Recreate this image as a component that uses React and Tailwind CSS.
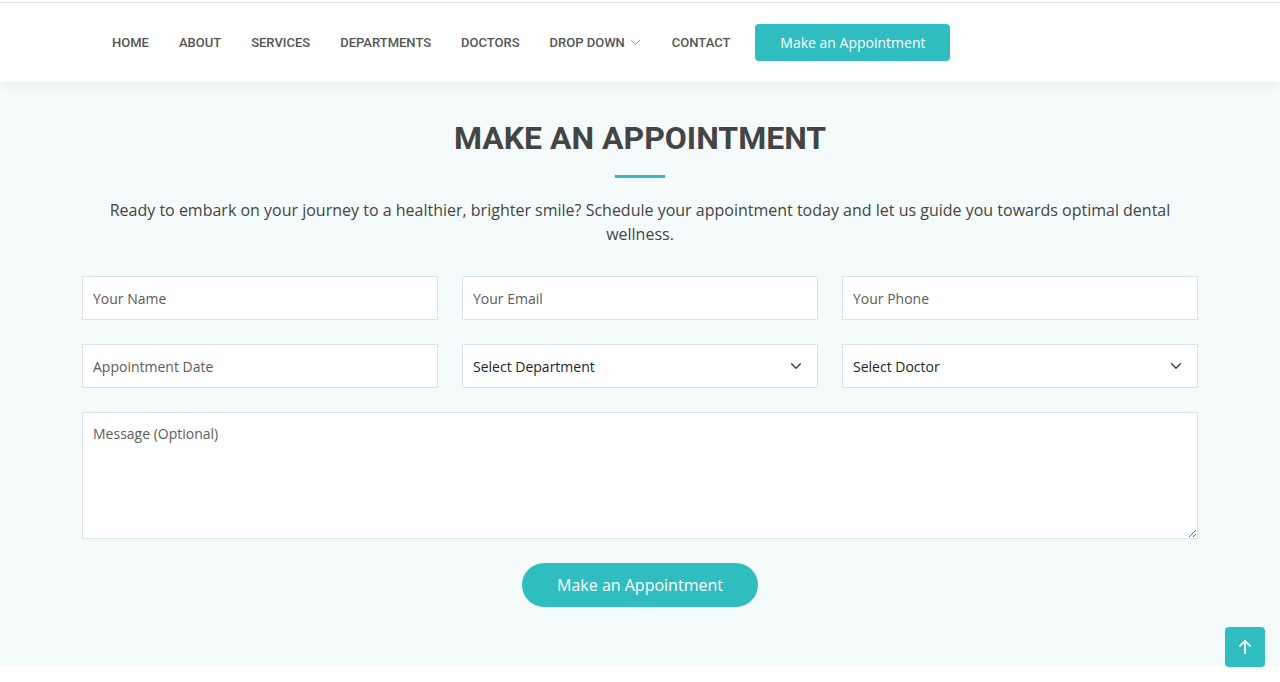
import React from "react";

const NAV = ["HOME", "ABOUT", "SERVICES", "DEPARTMENTS", "DOCTORS"];

function Chevron({ className, width = "1.5" }) {
  return (
    <svg viewBox="0 0 16 16" className={className} fill="none" stroke="currentColor" strokeWidth={width} strokeLinecap="round" strokeLinejoin="round">
      <path d="M3 5.5l5 5 5-5" />
    </svg>
  );
}

function Field({ placeholder }) {
  return (
    <input
      placeholder={placeholder}
      className="h-[44px] w-full border border-[#dee2e6] bg-white px-[10px] text-[14px] text-[#212529] outline-none placeholder:text-[#5c5c5c]"
    />
  );
}

function Select({ label }) {
  return (
    <div className="flex h-[44px] w-full items-center justify-between border border-[#dee2e6] bg-white pl-[10px] pr-[14px] text-[14px] text-[#212529]">
      <span>{label}</span>
      <Chevron className="h-[14px] w-[14px] text-[#343a40]" />
    </div>
  );
}

export default function App() {
  return (
    <div className="min-h-[682px] bg-white font-['Open_Sans',sans-serif]">
      <header className="relative z-10 h-[82px] bg-white pt-[2px] shadow-[0_2px_12px_rgba(0,0,0,0.07)]">
        <div className="border-t border-[#e2e2e2]" />
        <div className="flex h-[79px] items-center pl-[82px]">
          <nav className="flex items-center font-['Roboto',sans-serif] text-[13px] font-medium text-[#555555]">
            {NAV.map((n) => (
              <a key={n} className="pl-[30px]">{n}</a>
            ))}
            <a className="flex items-center gap-[4px] pl-[30px]">
              DROP DOWN <Chevron className="h-[13px] w-[13px] text-[#777777]" width="1" />
            </a>
            <a className="pl-[30px]">CONTACT</a>
          </nav>
          <button className="ml-[25px] h-[37px] w-[195px] rounded-[4px] bg-[#30bdbf] text-[14px] text-white">
            Make an Appointment
          </button>
        </div>
      </header>

      <section className="h-[584px] bg-[#f5fbfb] pt-[36px]">
        <div className="mx-auto w-[1116px]">
          <div className="flex flex-col items-center">
            <h2 className="font-['Roboto',sans-serif] text-[32px] font-bold leading-[40px] text-[#444444]">
              MAKE AN APPOINTMENT
            </h2>
            <div className="mt-[17px] h-[3px] w-[50px] bg-[#30bdbf]" />
            <p className="mt-[20px] text-center text-[16px] leading-[24px] text-[#444444]">
              Ready to embark on your journey to a healthier, brighter smile? Schedule your appointment today and let us guide you towards optimal dental wellness.
            </p>
          </div>

          <div className="mt-[30px] grid grid-cols-3 gap-[24px]">
            <Field placeholder="Your Name" />
            <Field placeholder="Your Email" />
            <Field placeholder="Your Phone" />
            <Field placeholder="Appointment Date" />
            <Select label="Select Department" />
            <Select label="Select Doctor" />
          </div>

          <textarea
            placeholder="Message (Optional)"
            className="mt-[24px] block h-[127px] w-full border border-[#dee2e6] bg-white px-[10px] py-[10px] text-[14px] outline-none placeholder:text-[#5c5c5c]"
          />

          <div className="mt-[24px] flex justify-center">
            <button className="h-[44px] w-[236px] rounded-full bg-[#30bdbf] text-[16px] text-white">
              Make an Appointment
            </button>
          </div>
        </div>
      </section>

      <a className="fixed bottom-[15px] right-[15px] flex h-[40px] w-[40px] items-center justify-center rounded-[4px] bg-[#30bdbf] text-white">
        <svg viewBox="0 0 16 16" className="h-[18px] w-[18px]" fill="none" stroke="currentColor" strokeWidth="1.6" strokeLinecap="round" strokeLinejoin="round">
          <path d="M8 13.5V2.5M3.5 7L8 2.5 12.5 7" />
        </svg>
      </a>
    </div>
  );
}
